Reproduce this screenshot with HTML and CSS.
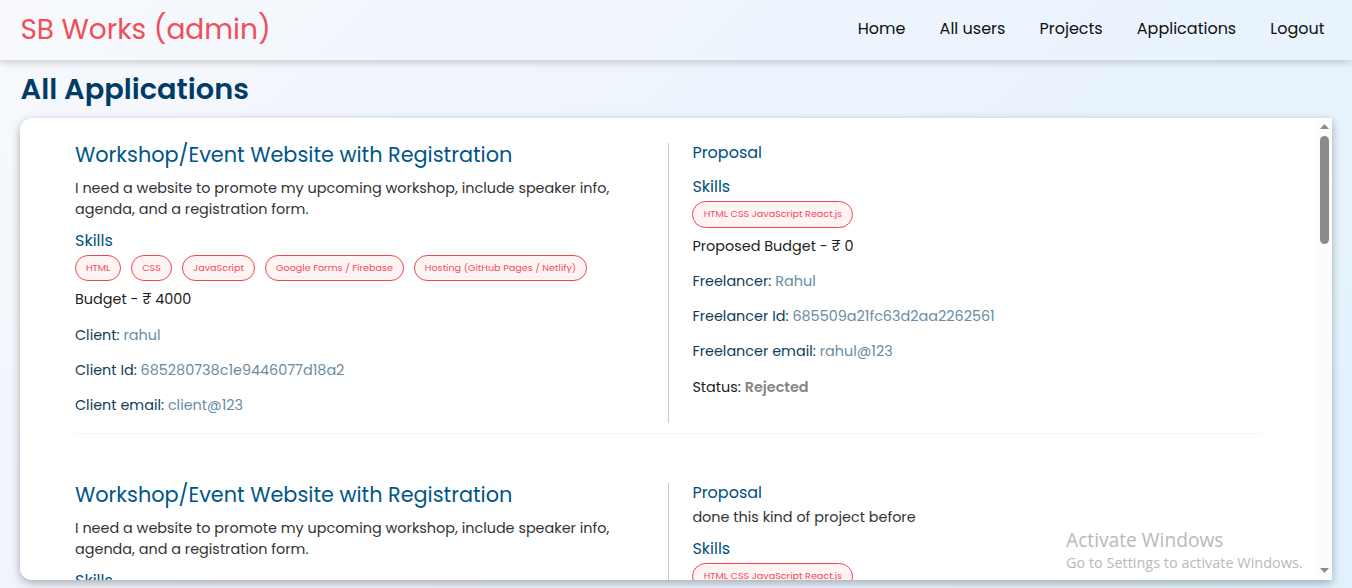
FILE: index.html
```html
<!DOCTYPE html>
<html lang="en">
<head>
<meta charset="utf-8">
<title>SB Works (admin)</title>
<link rel="stylesheet" href="styles.css">
</head>
<body>
<nav class="navbar">
  <h3 class="brand">SB Works (admin)</h3>
  <div class="nav-options">
    <p>Home</p><p>All users</p><p>Projects</p><p>Applications</p><p>Logout</p>
  </div>
</nav>
<h1 class="page-title">All Applications</h1>
<main class="panel">
  <div class="list">
    <section class="application">
      <div class="project">
        <h3>Workshop/Event Website with Registration</h3>
        <p class="desc">I need a website to promote my upcoming workshop, include speaker info,<br>agenda, and a registration form.</p>
        <h5>Skills</h5>
        <div class="chips"><span class="chip c1">HTML</span><span class="chip c2">CSS</span><span class="chip c3">JavaScript</span><span class="chip c4">Google Forms / Firebase</span><span class="chip c5">Hosting (GitHub Pages / Netlify)</span></div>
        <h6 class="budget">Budget - ₹ 4000</h6>
        <h6 class="field">Client: <span>rahul</span></h6>
        <h6 class="field">Client Id: <span>685280738c1e9446077d18a2</span></h6>
        <h6 class="field">Client email: <span>client@123</span></h6>
      </div>
      <div class="proposal">
        <h5>Proposal</h5>
        <p class="message"></p>
        <h5>Skills</h5>
        <div class="chips tall"><span class="chip c6">HTML CSS JavaScript React.js</span></div>
        <h6 class="budget">Proposed Budget - ₹ 0</h6>
        <h6 class="field">Freelancer: <span>Rahul</span></h6>
        <h6 class="field">Freelancer Id: <span>685509a21fc63d2aa2262561</span></h6>
        <h6 class="field">Freelancer email: <span>rahul@123</span></h6>
        <h6 class="field status">Status: <b>Rejected</b></h6>
      </div>
    </section>
    <hr>
    <section class="application">
      <div class="project">
        <h3>Workshop/Event Website with Registration</h3>
        <p class="desc">I need a website to promote my upcoming workshop, include speaker info,<br>agenda, and a registration form.</p>
        <h5>Skills</h5>
      </div>
      <div class="proposal">
        <h5>Proposal</h5>
        <p class="message filled">done this kind of project before</p>
        <h5>Skills</h5>
        <div class="chips tall"><span class="chip c6">HTML CSS JavaScript React.js</span></div>
      </div>
    </section>
  </div>
  <div class="scrollbar">
    <svg width="9" height="5" viewBox="0 0 9 5"><path d="M4.5 0 9 5H0Z"/></svg>
    <div class="thumb"></div>
    <svg class="down" width="9" height="5" viewBox="0 0 9 5"><path d="M0 0H9L4.5 5Z"/></svg>
  </div>
</main>
<aside class="watermark"><p class="w1">Activate Windows</p><p class="w2">Go to Settings to activate Windows.</p></aside>
</body>
</html>
```
FILE: styles.css
```css
* { box-sizing: border-box; }
html, body { height: 100%; }
body {
  margin: 0;
  overflow: hidden;
  font-family: Poppins, Inter, "Noto Sans", sans-serif;
  background: linear-gradient(135deg, #f7f9fc 0%, #eef4fd 42%, #e1f2fd 100%);
}
h1, h3, h5, h6, p { margin: 0; font-weight: 400; white-space: nowrap; }

.navbar {
  height: 60px;
  padding: 0 27.4px 3px 20.4px;
  display: flex;
  align-items: center;
  justify-content: space-between;
  box-shadow: 0 2px 8px rgba(0, 0, 0, .2);
}
.brand { padding-top: 3px; font-size: 28px; color: #f04e58; }
.nav-options { display: flex; gap: 34.1px; font-size: 16px; color: #111; }

.page-title {
  height: 58px;
  padding-left: 20.6px;
  line-height: 58px;
  font-size: 28.8px;
  font-weight: 600;
  color: #003c66;
}

.panel {
  display: flex;
  height: 462px;
  margin: 0 20px;
  overflow: hidden;
  background: #fff;
  border-radius: 12px 0 0 12px;
  box-shadow: 0 3px 10px rgba(0, 0, 0, .3);
}
.list { flex: 1; padding: 25px 55px 0; overflow: hidden; }
.application { display: flex; height: 280px; }
hr { height: 1px; margin: 10px 0 49px; border: 0; background: #f4f4f4; }
.project { width: 593px; }
.proposal { flex: 1; padding-left: 23.4px; border-left: 1px solid #c8c8c8; }

.project h3 { font-size: 20.8px; line-height: 24px; color: #005689; }
.desc { margin-top: 11px; font-size: 14.4px; line-height: 21px; color: #333; }
h5 { font-size: 16px; line-height: 20px; color: #00507f; }
.desc + h5 { margin-top: 11px; }
.chips { display: flex; gap: 10px; margin-top: 4px; }
.chip {
  height: 26px;
  border: 1px solid #ee4650;
  border-radius: 13.5px;
  background: #fff4f4;
  color: #ef4c60;
  font-size: 9.6px;
  line-height: 24px;
  text-align: center;
  white-space: nowrap;
}
.tall .chip { height: 27px; }
.c1 { width: 46px; }
.c2 { width: 41px; }
.c3 { width: 73px; }
.c4 { width: 139px; }
.c5 { width: 173px; }
.c6 { width: 161px; }

h6 { font-size: 14.4px; line-height: 20px; }
.budget { margin-top: 8px; color: #222; }
.project .budget { margin-bottom: 15.8px; }
.field { margin-top: 15.2px; color: #123b57; }
.field span { color: #6a8ba3; }
.proposal .budget { margin-top: 7.8px; }
.field.status { margin-top: 15.8px; color: #222; }
.status b { font-weight: 600; color: #858585; }
.message { height: 14px; font-size: 14.4px; line-height: 21px; color: #333; }
.message.filled { height: 36px; padding-top: 4px; }

.scrollbar {
  width: 15px;
  padding: 6px 0 7px;
  display: flex;
  flex-direction: column;
  align-items: center;
  background: #fcfcfc;
  fill: #8b8b8b;
}
.thumb { width: 9px; height: 108px; margin-top: 7px; border-radius: 5px; background: #8b8b8b; }
.down { margin-top: auto; }

.watermark {
  position: absolute;
  left: 1066px;
  top: 528px;
  color: #b9b9b9;
  font-family: "Open Sans", "Noto Sans", sans-serif;
}
.w1 { font-size: 19.2px; line-height: 24px; }
.w2 { font-size: 14.45px; line-height: 22px; }
```
